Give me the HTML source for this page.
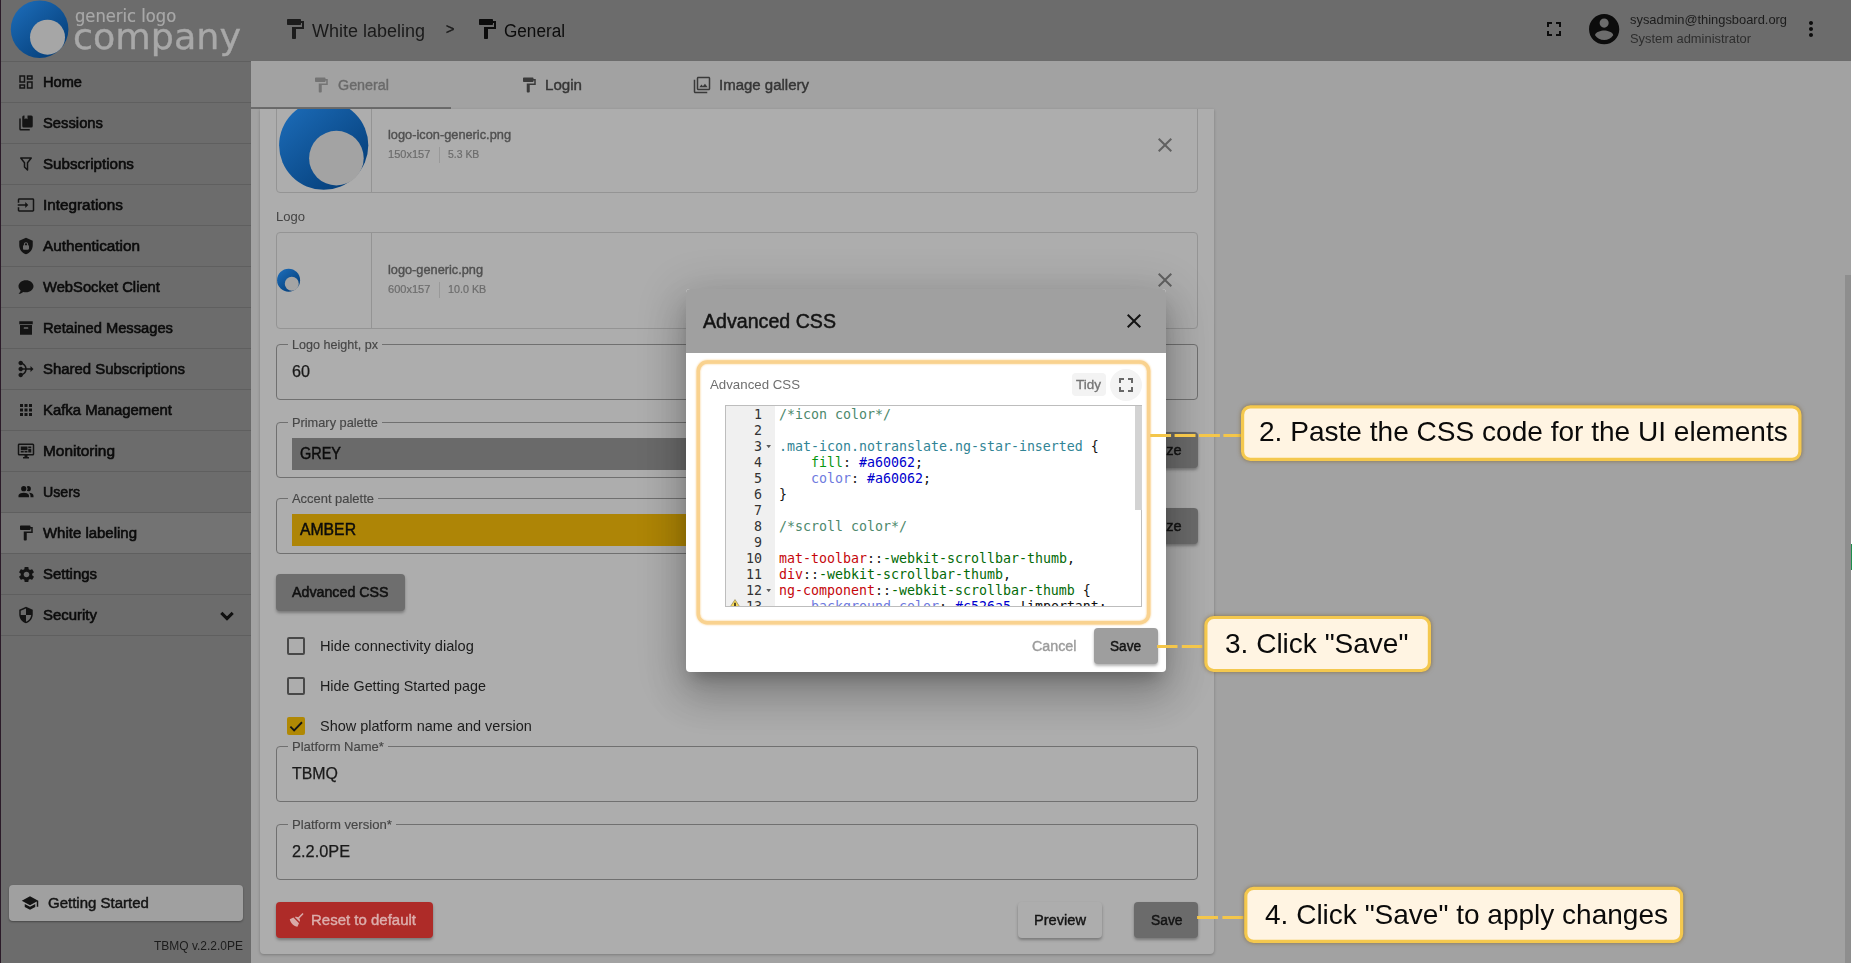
<!DOCTYPE html>
<html lang="en">
<head>
<meta charset="utf-8">
<title>White labeling - Advanced CSS</title>
<style>
*{box-sizing:border-box;margin:0;padding:0}
html,body{width:1852px;height:963px;overflow:hidden;background:#a2a2a2;font-family:"Liberation Sans",sans-serif;color:#161616}
.abs{position:absolute}
svg{display:block}
.t{position:absolute;white-space:nowrap;transform-origin:0 50%}
</style>
</head>
<body>
<div class="abs" style="left:0px;top:0px;width:1852px;height:61px;background:#6c6c6c"></div>
<div class="abs" style="left:0px;top:61px;width:251px;height:902px;background:#6c6c6c"></div>
<svg class="abs" style="left:8px;top:0;width:64px;height:61px" viewBox="8 0 64 61"><defs><linearGradient id="lg" x1="0.15" y1="0.1" x2="0.85" y2="0.9"><stop offset="0" stop-color="#1a68b3"/><stop offset="1" stop-color="#053f7a"/></linearGradient></defs><circle cx="39.6" cy="29.2" r="28.8" fill="url(#lg)"/><circle cx="47.5" cy="37.2" r="17.5" fill="#a6a6a6"/></svg>
<span class="t" style="left:74.70px;top:8.00px;font-size:16.8px;line-height:16.8px;color:#a8a8a8;font-family:'DejaVu Sans','Liberation Sans',sans-serif;-webkit-text-stroke:0.2px #a8a8a8;transform:scaleX(0.9738);">generic logo</span>
<span class="t" style="left:72.80px;top:20.00px;font-size:34.7px;line-height:34.7px;color:#a8a8a8;font-family:'DejaVu Sans','Liberation Sans',sans-serif;-webkit-text-stroke:0.35px #a8a8a8;transform:scaleX(1.0505);">company</span>
<div class="abs" style="left:1px;top:61px;width:250px;height:1px;background:#5f5f5f"></div>
<svg class="abs" style="left:17px;top:73px;width:18px;height:18px;fill:#141414;" viewBox="0 0 24 24"><path d="M19 5v2h-4V5h4M9 5v6H5V5h4m10 8v6h-4v-6h4M9 17v2H5v-2h4M21 3h-8v6h8V3zM11 3H3v10h8V3zm10 8h-8v10h8V11zm-10 4H3v6h8v-6z"/></svg>
<span class="t" style="left:43.00px;top:75.00px;font-size:14.9px;line-height:14.9px;color:#0c0c0c;-webkit-text-stroke:0.6px #0c0c0c;transform:scaleX(0.9812);">Home</span>
<div class="abs" style="left:1px;top:102px;width:250px;height:1px;background:#5f5f5f"></div>
<svg class="abs" style="left:17px;top:114px;width:18px;height:18px;fill:#141414;" viewBox="0 0 24 24"><path d="M19,18H9A2,2 0 0,1 7,16V4A2,2 0 0,1 9,2H10V7L12,5.5L14,7V2H19A2,2 0 0,1 21,4V16A2,2 0 0,1 19,18M17,20V22H5A2,2 0 0,1 3,20V6H5V20H17Z"/></svg>
<span class="t" style="left:43.00px;top:116.00px;font-size:14.9px;line-height:14.9px;color:#0c0c0c;-webkit-text-stroke:0.6px #0c0c0c;transform:scaleX(0.9924);">Sessions</span>
<div class="abs" style="left:1px;top:143px;width:250px;height:1px;background:#5f5f5f"></div>
<svg class="abs" style="left:17px;top:155px;width:18px;height:18px;fill:#141414;" viewBox="0 0 24 24"><path d="M15,19.88C15.04,20.18 14.94,20.5 14.71,20.71C14.32,21.1 13.69,21.1 13.3,20.71L9.29,16.7C9.06,16.47 8.96,16.16 9,15.87V10.75L4.21,4.62C3.87,4.19 3.95,3.56 4.38,3.22C4.57,3.08 4.78,3 5,3V3H19V3C19.22,3 19.43,3.08 19.62,3.22C20.05,3.56 20.13,4.19 19.79,4.62L15,10.75V19.88M7.04,5L11,10.06V15.58L13,17.58V10.05L16.96,5H7.04Z"/></svg>
<span class="t" style="left:43.00px;top:157.00px;font-size:14.9px;line-height:14.9px;color:#0c0c0c;-webkit-text-stroke:0.6px #0c0c0c;transform:scaleX(1.0174);">Subscriptions</span>
<div class="abs" style="left:1px;top:184px;width:250px;height:1px;background:#5f5f5f"></div>
<svg class="abs" style="left:17px;top:196px;width:18px;height:18px;fill:#141414;" viewBox="0 0 24 24"><path d="M21 3.01H3c-1.1 0-2 .9-2 2V9h2V4.99h18v14.03H3V15H1v4.01c0 1.1.9 1.98 2 1.98h18c1.1 0 2-.88 2-1.98v-14c0-1.11-.9-2-2-2zM11 16l4-4-4-4v3H1v2h10v3z"/></svg>
<span class="t" style="left:43.00px;top:198.00px;font-size:14.9px;line-height:14.9px;color:#0c0c0c;-webkit-text-stroke:0.6px #0c0c0c;transform:scaleX(1.0275);">Integrations</span>
<div class="abs" style="left:1px;top:225px;width:250px;height:1px;background:#5f5f5f"></div>
<svg class="abs" style="left:17px;top:237px;width:18px;height:18px;fill:#141414;" viewBox="0 0 24 24"><path d="M12,1L3,5V11C3,16.55 6.84,21.74 12,23C17.16,21.74 21,16.55 21,11V5L12,1M12,7C13.4,7 14.8,8.1 14.8,9.5V11C15.4,11 16,11.6 16,12.3V15.8C16,16.4 15.4,17 14.7,17H9.2C8.6,17 8,16.4 8,15.7V12.2C8,11.6 8.6,11 9.2,11V9.5C9.2,8.1 10.6,7 12,7M12,8.2C11.2,8.2 10.5,8.7 10.5,9.5V11H13.5V9.5C13.5,8.7 12.8,8.2 12,8.2Z"/></svg>
<span class="t" style="left:43.00px;top:239.00px;font-size:14.9px;line-height:14.9px;color:#0c0c0c;-webkit-text-stroke:0.6px #0c0c0c;transform:scaleX(1.0272);">Authentication</span>
<div class="abs" style="left:1px;top:266px;width:250px;height:1px;background:#5f5f5f"></div>
<svg class="abs" style="left:17px;top:278px;width:18px;height:18px;fill:#141414;" viewBox="0 0 24 24"><path d="M12,3C17.5,3 22,6.58 22,11C22,15.42 17.5,19 12,19C10.76,19 9.57,18.82 8.47,18.5C5.55,21 2,21 2,21C4.33,18.67 4.7,17.1 4.75,16.5C3.05,15.07 2,13.13 2,11C2,6.58 6.5,3 12,3Z"/></svg>
<span class="t" style="left:43.00px;top:280.00px;font-size:14.9px;line-height:14.9px;color:#0c0c0c;-webkit-text-stroke:0.6px #0c0c0c;transform:scaleX(0.9902);">WebSocket Client</span>
<div class="abs" style="left:1px;top:307px;width:250px;height:1px;background:#5f5f5f"></div>
<svg class="abs" style="left:17px;top:319px;width:18px;height:18px;fill:#141414;" viewBox="0 0 24 24"><path d="M3,3H21V7H3V3M4,8H20V21H4V8M9.5,11A0.5,0.5 0 0,0 9,11.5V13H15V11.5A0.5,0.5 0 0,0 14.5,11H9.5Z"/></svg>
<span class="t" style="left:43.00px;top:321.00px;font-size:14.9px;line-height:14.9px;color:#0c0c0c;-webkit-text-stroke:0.6px #0c0c0c;transform:scaleX(0.9871);">Retained Messages</span>
<div class="abs" style="left:1px;top:348px;width:250px;height:1px;background:#5f5f5f"></div>
<svg class="abs" style="left:17px;top:360px;width:18px;height:18px;fill:#141414;" viewBox="0 0 24 24"><path d="M18 13h-5.06c-.34 3.1-2.26 5.72-4.94 7.05C7.96 21.69 6.64 23 5 23c-1.66 0-3-1.340-3-3s1.340-3 3-3c.95 0 1.780.45 2.330 1.140 1.900-1.030 3.260-2.910 3.580-5.140h-3.100C7.400 14.160 6.300 15 5 15c-1.660 0-3-1.340-3-3s1.340-3 3-3c1.300 0 2.400.84 2.820 2h3.100c-.32-2.230-1.690-4.100-3.590-5.140C6.780 6.550 5.950 7 5 7 3.340 7 2 5.660 2 4s1.340-3 3-3c1.640 0 2.960 1.310 2.990 2.950 2.680 1.330 4.600 3.950 4.940 7.050H18V8l4 4-4 4v-3z"/></svg>
<span class="t" style="left:43.00px;top:362.00px;font-size:14.9px;line-height:14.9px;color:#0c0c0c;-webkit-text-stroke:0.6px #0c0c0c;transform:scaleX(1.0026);">Shared Subscriptions</span>
<div class="abs" style="left:1px;top:389px;width:250px;height:1px;background:#5f5f5f"></div>
<svg class="abs" style="left:17px;top:401px;width:18px;height:18px;fill:#141414;" viewBox="0 0 24 24"><path d="M4 8h4V4H4v4zm6 12h4v-4h-4v4zm-6 0h4v-4H4v4zm0-6h4v-4H4v4zm6 0h4v-4h-4v4zm6-10v4h4V4h-4zm-6 4h4V4h-4v4zm6 6h4v-4h-4v4zm0 6h4v-4h-4v4z"/></svg>
<span class="t" style="left:43.00px;top:403.00px;font-size:14.9px;line-height:14.9px;color:#0c0c0c;-webkit-text-stroke:0.6px #0c0c0c;transform:scaleX(0.9984);">Kafka Management</span>
<div class="abs" style="left:1px;top:430px;width:250px;height:1px;background:#5f5f5f"></div>
<svg class="abs" style="left:17px;top:442px;width:18px;height:18px;fill:#141414;" viewBox="0 0 24 24"><path d="M21,16V4H3V16H21M21,2A2,2 0 0,1 23,4V16A2,2 0 0,1 21,18H14V20H16V22H8V20H10V18H3C1.89,18 1,17.1 1,16V4C1,2.89 1.89,2 3,2H21M5,6H14V11H5V6M15,6H19V8H15V6M19,9V14H15V9H19M5,12H9V14H5V12M10,12H14V14H10V12Z"/></svg>
<span class="t" style="left:43.00px;top:444.00px;font-size:14.9px;line-height:14.9px;color:#0c0c0c;-webkit-text-stroke:0.6px #0c0c0c;transform:scaleX(1.0350);">Monitoring</span>
<div class="abs" style="left:1px;top:471px;width:250px;height:1px;background:#5f5f5f"></div>
<svg class="abs" style="left:16.7px;top:482.8px;width:18px;height:18px;fill:#111;" viewBox="0 0 24 24"><path d="M16 17V19H2V17S2 13 9 13 16 17 16 17M12.5 7.5A3.5 3.5 0 1 0 9 11A3.5 3.5 0 0 0 12.5 7.5M15.94 13A5.32 5.32 0 0 1 18 17V19H22V17S22 13.37 15.94 13M15 4A3.39 3.39 0 0 0 13.07 4.59A5 5 0 0 1 13.07 10.41A3.39 3.39 0 0 0 15 11A3.5 3.5 0 0 0 15 4Z"/></svg>
<span class="t" style="left:43.00px;top:485.00px;font-size:14.9px;line-height:14.9px;color:#0c0c0c;-webkit-text-stroke:0.6px #0c0c0c;transform:scaleX(0.9509);">Users</span>
<div class="abs" style="left:1px;top:513px;width:250px;height:40px;background:#737373"></div>
<div class="abs" style="left:1px;top:512px;width:250px;height:1px;background:#5f5f5f"></div>
<svg class="abs" style="left:17px;top:524px;width:18px;height:18px;fill:#141414;" viewBox="0 0 24 24"><path d="M18 4V3c0-.55-.45-1-1-1H5c-.55 0-1 .45-1 1v4c0 .55.45 1 1 1h12c.55 0 1-.45 1-1V6h1v4H9v11c0 .55.45 1 1 1h2c.55 0 1-.45 1-1v-9h8V4h-3z"/></svg>
<span class="t" style="left:43.00px;top:526.00px;font-size:14.9px;line-height:14.9px;color:#0c0c0c;-webkit-text-stroke:0.6px #0c0c0c;transform:scaleX(1.0044);">White labeling</span>
<div class="abs" style="left:1px;top:553px;width:250px;height:1px;background:#5f5f5f"></div>
<svg class="abs" style="left:16.5px;top:564.5px;width:19px;height:19px;fill:#141414;" viewBox="0 0 24 24"><path d="M19.14,12.94c0.04-0.3,0.06-0.61,0.06-0.94c0-0.32-0.02-0.64-0.07-0.94l2.03-1.58c0.18-0.14,0.23-0.41,0.12-0.61 l-1.92-3.32c-0.12-0.22-0.37-0.29-0.59-0.22l-2.39,0.96c-0.5-0.38-1.03-0.7-1.62-0.94L14.4,2.81c-0.04-0.24-0.24-0.41-0.48-0.41 h-3.84c-0.24,0-0.43,0.17-0.47,0.41L9.25,5.35C8.66,5.59,8.12,5.92,7.63,6.29L5.24,5.33c-0.22-0.08-0.47,0-0.59,0.22L2.74,8.87 C2.62,9.08,2.66,9.34,2.86,9.48l2.03,1.58C4.84,11.36,4.8,11.69,4.8,12s0.02,0.64,0.07,0.94l-2.03,1.58 c-0.18,0.14-0.23,0.41-0.12,0.61l1.92,3.32c0.12,0.22,0.37,0.29,0.59,0.22l2.39-0.96c0.5,0.38,1.03,0.7,1.62,0.94l0.36,2.54 c0.05,0.24,0.24,0.41,0.48,0.41h3.84c0.24,0,0.44-0.17,0.47-0.41l0.36-2.54c0.59-0.24,1.13-0.56,1.62-0.94l2.39,0.96 c0.22,0.08,0.47,0,0.59-0.22l1.92-3.32c0.12-0.22,0.07-0.47-0.12-0.61L19.14,12.94z M12,15.6c-1.98,0-3.6-1.62-3.6-3.6 s1.62-3.6,3.6-3.6s3.6,1.62,3.6,3.6S13.98,15.6,12,15.6z"/></svg>
<span class="t" style="left:43.00px;top:567.00px;font-size:14.9px;line-height:14.9px;color:#0c0c0c;-webkit-text-stroke:0.6px #0c0c0c;transform:scaleX(1.0030);">Settings</span>
<div class="abs" style="left:1px;top:594px;width:250px;height:1px;background:#5f5f5f"></div>
<svg class="abs" style="left:17px;top:606px;width:18px;height:18px;fill:#141414;" viewBox="0 0 24 24"><path d="M12 1L3 5v6c0 5.55 3.84 10.74 9 12 5.16-1.26 9-6.45 9-12V5l-9-4zm0 10.990h7c-.53 4.120-3.280 7.790-7 8.940V12H5V6.3l7-3.110v8.800z"/></svg>
<span class="t" style="left:43.00px;top:608.00px;font-size:14.9px;line-height:14.9px;color:#0c0c0c;-webkit-text-stroke:0.6px #0c0c0c;transform:scaleX(1.0033);">Security</span>
<div class="abs" style="left:1px;top:635px;width:250px;height:1px;background:#5f5f5f"></div>
<svg class="abs" style="left:215px;top:603.6px;width:24px;height:24px;fill:#111;stroke:#111;stroke-width:1.1" viewBox="0 0 24 24"><path d="M16.59 8.59L12 13.17 7.41 8.59 6 10l6 6 6-6z"/></svg>
<div class="abs" style="left:9px;top:885px;width:234px;height:36px;background:#a0a0a0;border-radius:4px;box-shadow:0 1px 2px rgba(0,0,0,.35)"></div>
<svg class="abs" style="left:21px;top:894px;width:18px;height:18px;fill:#141414;" viewBox="0 0 24 24"><path d="M5 13.18v4L12 21l7-3.82v-4L12 17l-7-3.82zM12 3L1 9l11 6 9-4.91V17h2V9L12 3z"/></svg>
<span class="t" style="left:48.00px;top:896.00px;font-size:14.9px;line-height:14.9px;color:#141414;-webkit-text-stroke:0.45px #141414;transform:scaleX(1.0078);">Getting Started</span>
<span class="t" style="left:154.00px;top:939.50px;font-size:12px;line-height:12px;color:#1c1c1c;transform:scaleX(0.9984);">TBMQ v.2.2.0PE</span>
<div class="abs" style="left:0px;top:0px;width:1px;height:963px;background:#2b1b29"></div>
<svg class="abs" style="left:283px;top:17px;width:24px;height:24px;fill:#1c1c1c;" viewBox="0 0 24 24"><path d="M18 4V3c0-.55-.45-1-1-1H5c-.55 0-1 .45-1 1v4c0 .55.45 1 1 1h12c.55 0 1-.45 1-1V6h1v4H9v11c0 .55.45 1 1 1h2c.55 0 1-.45 1-1v-9h8V4h-3z"/></svg>
<span class="t" style="left:312.00px;top:22.00px;font-size:18px;line-height:18px;color:#1a1a1a;transform:scaleX(0.9994);">White labeling</span>
<span class="t" style="left:446.20px;top:21.50px;font-size:14px;line-height:14px;color:#1a1a1a;-webkit-text-stroke:0.4px #1a1a1a;transform:scaleX(1.0274);">&gt;</span>
<svg class="abs" style="left:475.2px;top:17px;width:24px;height:24px;fill:#0c0c0c;" viewBox="0 0 24 24"><path d="M18 4V3c0-.55-.45-1-1-1H5c-.55 0-1 .45-1 1v4c0 .55.45 1 1 1h12c.55 0 1-.45 1-1V6h1v4H9v11c0 .55.45 1 1 1h2c.55 0 1-.45 1-1v-9h8V4h-3z"/></svg>
<span class="t" style="left:504.00px;top:22.00px;font-size:18px;line-height:18px;color:#0c0c0c;transform:scaleX(0.9526);">General</span>
<svg class="abs" style="left:1542px;top:17px;width:24px;height:24px;fill:#0c0c0c;" viewBox="0 0 24 24"><path d="M7 14H5v5h5v-2H7v-3zm-2-4h2V7h3V5H5v5zm12 7h-3v2h5v-5h-2v3zM14 5v2h3v3h2V5h-5z"/></svg>
<svg class="abs" style="left:1585.85px;top:10.75px;width:36.3px;height:36.3px;fill:#0c0c0c;" viewBox="0 0 24 24"><path d="M12 2C6.48 2 2 6.48 2 12s4.48 10 10 10 10-4.48 10-10S17.52 2 12 2zm0 3c1.66 0 3 1.34 3 3s-1.34 3-3 3-3-1.34-3-3 1.34-3 3-3zm0 14.200c-2.500 0-4.710-1.280-6-3.220.030-1.990 4-3.080 6-3.080 1.990 0 5.970 1.090 6 3.080-1.290 1.940-3.500 3.220-6 3.220z"/></svg>
<span class="t" style="left:1630.00px;top:13.00px;font-size:13px;line-height:13px;color:#1c1c1c;transform:scaleX(0.9909);">sysadmin@thingsboard.org</span>
<span class="t" style="left:1630.00px;top:32.00px;font-size:13px;line-height:13px;color:#2e2e2e;transform:scaleX(0.9911);">System administrator</span>
<svg class="abs" style="left:1799px;top:17px;width:24px;height:24px;fill:#0c0c0c;" viewBox="0 0 24 24"><path d="M12 8c1.1 0 2-.9 2-2s-.9-2-2-2-2 .9-2 2 .9 2 2 2zm0 2c-1.1 0-2 .9-2 2s.9 2 2 2 2-.9 2-2-.9-2-2-2zm0 6c-1.1 0-2 .9-2 2s.9 2 2 2 2-.9 2-2-.9-2-2-2z"/></svg>
<svg class="abs" style="left:312px;top:76px;width:18px;height:18px;fill:#747474;" viewBox="0 0 24 24"><path d="M18 4V3c0-.55-.45-1-1-1H5c-.55 0-1 .45-1 1v4c0 .55.45 1 1 1h12c.55 0 1-.45 1-1V6h1v4H9v11c0 .55.45 1 1 1h2c.55 0 1-.45 1-1v-9h8V4h-3z"/></svg>
<span class="t" style="left:338.00px;top:78.00px;font-size:14px;line-height:14px;color:#6a6a6a;-webkit-text-stroke:0.4px #6a6a6a;transform:scaleX(1.0240);">General</span>
<div class="abs" style="left:251px;top:107px;width:200px;height:2px;background:#6c6c6c"></div>
<svg class="abs" style="left:520px;top:76px;width:18px;height:18px;fill:#3a3a3a;" viewBox="0 0 24 24"><path d="M18 4V3c0-.55-.45-1-1-1H5c-.55 0-1 .45-1 1v4c0 .55.45 1 1 1h12c.55 0 1-.45 1-1V6h1v4H9v11c0 .55.45 1 1 1h2c.55 0 1-.45 1-1v-9h8V4h-3z"/></svg>
<span class="t" style="left:545.00px;top:78.00px;font-size:14px;line-height:14px;color:#363636;-webkit-text-stroke:0.4px #363636;transform:scaleX(1.0801);">Login</span>
<svg class="abs" style="left:693px;top:76px;width:18px;height:18px;fill:#3a3a3a;" viewBox="0 0 24 24"><path d="M15.96 10.29l-2.75 3.54-1.96-2.36L8.5 15h11l-3.54-4.71zM3 5H1v16c0 1.1.9 2 2 2h16v-2H3V5zm18-4H7c-1.1 0-2 .9-2 2v14c0 1.1.9 2 2 2h14c1.1 0 2-.9 2-2V3c0-1.1-.9-2-2-2zm0 16H7V3h14v14z"/></svg>
<span class="t" style="left:719.00px;top:78.00px;font-size:14px;line-height:14px;color:#363636;-webkit-text-stroke:0.4px #363636;transform:scaleX(1.0709);">Image gallery</span>
<div class="abs" style="left:260px;top:109px;width:954px;height:845px;background:#adadad;border-radius:0 0 4px 4px;box-shadow:0 1px 3px rgba(0,0,0,.25)"></div>
<div class="abs" style="left:259px;top:109px;width:955px;height:100px;overflow:hidden">
<div class="abs" style="left:17px;top:-13px;width:922px;height:97px;border:1px solid #949494;border-radius:4px"></div>
<div class="abs" style="left:112px;top:-13px;width:1px;height:97px;background:#949494"></div>
<svg class="abs" style="left:18px;top:-12px;width:94px;height:96px" viewBox="277 97 94 96"><circle cx="323.7" cy="145.25" r="44.6" fill="url(#lg)"/><circle cx="336.4" cy="158.15" r="27.3" fill="#a3a3a3"/></svg>
</div>
<span class="t" style="left:388.00px;top:128.00px;font-size:13px;line-height:13px;color:#505050;-webkit-text-stroke:0.4px #505050;transform:scaleX(0.9838);">logo-icon-generic.png</span>
<span class="t" style="left:388.00px;top:149.00px;font-size:11px;line-height:11px;color:#6c6c6c;-webkit-text-stroke:0.2px #6c6c6c;transform:scaleX(1.0022);">150x157</span>
<div class="abs" style="left:439px;top:147px;width:1px;height:16px;background:#999"></div>
<span class="t" style="left:448.00px;top:149.00px;font-size:11px;line-height:11px;color:#6c6c6c;-webkit-text-stroke:0.2px #6c6c6c;transform:scaleX(0.9479);">5.3 KB</span>
<svg class="abs" style="left:1153.4px;top:133px;width:24px;height:24px;fill:#616161;" viewBox="0 0 24 24"><path d="M19 6.41L17.59 5 12 10.59 6.41 5 5 6.41 10.59 12 5 17.59 6.41 19 12 13.41 17.59 19 19 17.59 13.41 12z"/></svg>
<span class="t" style="left:276.00px;top:209.50px;font-size:13px;line-height:13px;color:#444;transform:scaleX(1.0028);">Logo</span>
<div class="abs" style="left:276px;top:232px;width:922px;height:97px;border:1px solid #949494;border-radius:4px"></div>
<div class="abs" style="left:371px;top:232px;width:1px;height:97px;background:#949494"></div>
<svg class="abs" style="left:276px;top:267px;width:26px;height:26px" viewBox="276 267 26 26"><circle cx="288.6" cy="280.2" r="11.5" fill="url(#lg)"/><circle cx="291.8" cy="283.7" r="7" fill="#a4a4a4"/></svg>
<span class="t" style="left:388.00px;top:263.00px;font-size:13px;line-height:13px;color:#505050;-webkit-text-stroke:0.4px #505050;transform:scaleX(0.9809);">logo-generic.png</span>
<span class="t" style="left:388.00px;top:284.00px;font-size:11px;line-height:11px;color:#6c6c6c;-webkit-text-stroke:0.2px #6c6c6c;transform:scaleX(1.0022);">600x157</span>
<div class="abs" style="left:439px;top:282px;width:1px;height:16px;background:#999"></div>
<span class="t" style="left:448.00px;top:284.00px;font-size:11px;line-height:11px;color:#6c6c6c;-webkit-text-stroke:0.2px #6c6c6c;transform:scaleX(0.9786);">10.0 KB</span>
<svg class="abs" style="left:1153.4px;top:268px;width:24px;height:24px;fill:#616161;" viewBox="0 0 24 24"><path d="M19 6.41L17.59 5 12 10.59 6.41 5 5 6.41 10.59 12 5 17.59 6.41 19 12 13.41 17.59 19 19 17.59 13.41 12z"/></svg>
<div class="abs" style="left:276px;top:344px;width:922px;height:56px;border:1px solid #707070;border-radius:4px"></div>
<div class="abs" style="left:288px;top:344px;width:94.3px;height:1px;background:#adadad"></div>
<span class="t" style="left:292.00px;top:339.00px;font-size:12.4px;line-height:12.4px;color:#464646;-webkit-text-stroke:0.15px #464646;transform:scaleX(1.0141);">Logo height, px</span>
<span class="t" style="left:292.00px;top:364.00px;font-size:16px;line-height:16px;color:#1a1a1a;-webkit-text-stroke:0.25px #1a1a1a;transform:scaleX(1.0114);">60</span>
<div class="abs" style="left:276px;top:422px;width:810px;height:56px;border:1px solid #707070;border-radius:4px"></div>
<div class="abs" style="left:288px;top:422px;width:94.3px;height:1px;background:#adadad"></div>
<span class="t" style="left:292.00px;top:417.00px;font-size:12.4px;line-height:12.4px;color:#464646;-webkit-text-stroke:0.15px #464646;transform:scaleX(1.0314);">Primary palette</span>
<div class="abs" style="left:292px;top:438px;width:778px;height:32px;background:#6a6a6a"></div>
<span class="t" style="left:300.00px;top:446.00px;font-size:16px;line-height:16px;color:#0c0c0c;-webkit-text-stroke:0.45px #0c0c0c;transform:scaleX(0.9042);">GREY</span>
<div class="abs" style="left:276px;top:498px;width:810px;height:56px;border:1px solid #707070;border-radius:4px"></div>
<div class="abs" style="left:288px;top:498px;width:90.3px;height:1px;background:#adadad"></div>
<span class="t" style="left:292.00px;top:493.00px;font-size:12.4px;line-height:12.4px;color:#464646;-webkit-text-stroke:0.15px #464646;transform:scaleX(1.0435);">Accent palette</span>
<div class="abs" style="left:292px;top:514px;width:778px;height:32px;background:#ae8506"></div>
<span class="t" style="left:300.00px;top:522.00px;font-size:16px;line-height:16px;color:#0c0c0c;-webkit-text-stroke:0.45px #0c0c0c;transform:scaleX(0.9842);">AMBER</span>
<div class="abs" style="left:1100px;top:432px;width:98px;height:36px;background:#6b6b6b;border-radius:4px;box-shadow:0 2px 3px rgba(0,0,0,.3)"></div>
<span class="t" style="left:1113.00px;top:442.60px;font-size:14px;line-height:14px;color:#141414;-webkit-text-stroke:0.45px #141414;transform:scaleX(1.0358);">Customize</span>
<div class="abs" style="left:1100px;top:508px;width:98px;height:36px;background:#6b6b6b;border-radius:4px;box-shadow:0 2px 3px rgba(0,0,0,.3)"></div>
<span class="t" style="left:1113.00px;top:518.60px;font-size:14px;line-height:14px;color:#141414;-webkit-text-stroke:0.45px #141414;transform:scaleX(1.0358);">Customize</span>
<div class="abs" style="left:276px;top:574px;width:129px;height:36.5px;background:#6e6e6e;border-radius:4px;box-shadow:0 2px 3px rgba(0,0,0,.3)"></div>
<span class="t" style="left:292.00px;top:585.00px;font-size:14px;line-height:14px;color:#111;-webkit-text-stroke:0.55px #111;transform:scaleX(1.0164);">Advanced CSS</span>
<div class="abs" style="left:287px;top:637px;width:18px;height:18px;border:2px solid #484848;border-radius:2px"></div>
<span class="t" style="left:320.00px;top:639.00px;font-size:14.2px;line-height:14.2px;color:#1c1c1c;transform:scaleX(1.0323);">Hide connectivity dialog</span>
<div class="abs" style="left:287px;top:677px;width:18px;height:18px;border:2px solid #484848;border-radius:2px"></div>
<span class="t" style="left:320.00px;top:679.00px;font-size:14.2px;line-height:14.2px;color:#1c1c1c;transform:scaleX(1.0110);">Hide Getting Started page</span>
<div class="abs" style="left:287px;top:717px;width:18px;height:18px;background:#b08804;border-radius:2px"></div>
<svg class="abs" style="left:287px;top:717px;width:18px;height:18px" viewBox="0 0 24 24"><path d="M4.5 12.8l5 5L20 7" fill="none" stroke="#151515" stroke-width="2.4"/></svg>
<span class="t" style="left:320.00px;top:719.00px;font-size:14.2px;line-height:14.2px;color:#1c1c1c;transform:scaleX(1.0213);">Show platform name and version</span>
<div class="abs" style="left:276px;top:746px;width:922px;height:56px;border:1px solid #707070;border-radius:4px"></div>
<div class="abs" style="left:288px;top:746px;width:100.3px;height:1px;background:#adadad"></div>
<span class="t" style="left:292.00px;top:741.00px;font-size:12.4px;line-height:12.4px;color:#464646;-webkit-text-stroke:0.15px #464646;transform:scaleX(1.0512);">Platform Name*</span>
<span class="t" style="left:292.00px;top:766.00px;font-size:16px;line-height:16px;color:#1a1a1a;-webkit-text-stroke:0.25px #1a1a1a;transform:scaleX(0.9953);">TBMQ</span>
<div class="abs" style="left:276px;top:824px;width:922px;height:56px;border:1px solid #707070;border-radius:4px"></div>
<div class="abs" style="left:288px;top:824px;width:108.3px;height:1px;background:#adadad"></div>
<span class="t" style="left:292.00px;top:819.00px;font-size:12.4px;line-height:12.4px;color:#464646;-webkit-text-stroke:0.15px #464646;transform:scaleX(1.0592);">Platform version*</span>
<span class="t" style="left:292.00px;top:844.00px;font-size:16px;line-height:16px;color:#1a1a1a;-webkit-text-stroke:0.25px #1a1a1a;transform:scaleX(1.0188);">2.2.0PE</span>
<div class="abs" style="left:276px;top:902px;width:157px;height:36px;background:#ae2b28;border-radius:4px;box-shadow:0 2px 3px rgba(0,0,0,.3)"></div>
<svg class="abs" style="left:288px;top:911px;width:18px;height:18px;fill:#d9a9a7;" viewBox="0 0 24 24"><path d="M19.36,2.72L20.78,4.14L15.06,9.85C16.13,11.39 16.28,13.24 15.38,14.44L9.06,8.12C10.26,7.22 12.11,7.37 13.65,8.44L19.36,2.72M5.93,17.57C3.92,15.56 2.69,13.16 2.35,10.92L7.23,8.83L14.67,16.27L12.58,21.15C10.34,20.81 7.94,19.58 5.93,17.57Z"/></svg>
<span class="t" style="left:311.00px;top:913.00px;font-size:14px;line-height:14px;color:#dcaeac;-webkit-text-stroke:0.4px #dcaeac;transform:scaleX(1.0708);">Reset to default</span>
<div class="abs" style="left:1018px;top:902px;width:84px;height:36px;background:#adadad;border-radius:4px;box-shadow:0 2px 3px rgba(0,0,0,.3)"></div>
<span class="t" style="left:1034.00px;top:913.00px;font-size:14px;line-height:14px;color:#141414;-webkit-text-stroke:0.4px #141414;transform:scaleX(1.0443);">Preview</span>
<div class="abs" style="left:1134px;top:902px;width:64px;height:36.4px;background:#6b6b6b;border-radius:4px;box-shadow:0 2px 3px rgba(0,0,0,.3)"></div>
<span class="t" style="left:1150.50px;top:912.80px;font-size:14px;line-height:14px;color:#141414;-webkit-text-stroke:0.45px #141414;transform:scaleX(0.9871);">Save</span>
<div class="abs" style="left:1845px;top:275px;width:6px;height:688px;background:#8e8e8e"></div>
<div class="abs" style="left:1851px;top:0px;width:1px;height:963px;background:#fff"></div>
<div class="abs" style="left:1851px;top:544px;width:1px;height:26px;background:#1e8e4e"></div>
<div class="abs" style="left:686px;top:289px;width:480px;height:383px;background:#fff;border-radius:4px;box-shadow:0 11px 15px -7px rgba(0,0,0,.25),0 24px 38px 3px rgba(0,0,0,.16),0 9px 46px 8px rgba(0,0,0,.14)"></div>
<div class="abs" style="left:686px;top:289px;width:480px;height:64px;background:#a0a0a0;border-radius:4px 4px 0 0"></div>
<span class="t" style="left:702.50px;top:310.60px;font-size:20px;line-height:20px;color:#141414;-webkit-text-stroke:0.5px #141414;transform:scaleX(0.9806);">Advanced CSS</span>
<svg class="abs" style="left:1122px;top:309px;width:24px;height:24px;fill:#141414;" viewBox="0 0 24 24"><path d="M19 6.41L17.59 5 12 10.59 6.41 5 5 6.41 10.59 12 5 17.59 6.41 19 12 13.41 17.59 19 19 17.59 13.41 12z"/></svg>
<svg class="abs" style="left:690px;top:354px;width:468px;height:278px;overflow:visible" viewBox="690 354 468 278"><rect x="698.25" y="362.1" width="450.4" height="260.65" rx="9" fill="none" stroke="#f9d28f" stroke-width="3.5" style="filter:drop-shadow(0 0 1px rgba(248,200,120,.9))"/></svg>
<span class="t" style="left:710.00px;top:377.50px;font-size:13px;line-height:13px;color:#6f6f6f;transform:scaleX(1.0208);">Advanced CSS</span>
<div class="abs" style="left:1072px;top:373px;width:34px;height:22.7px;background:#f3f3f3;border-radius:4px"></div>
<span class="t" style="left:1076.20px;top:379.00px;font-size:12px;line-height:12px;color:#757575;-webkit-text-stroke:0.3px #757575;transform:scaleX(1.1249);">Tidy</span>
<div class="abs" style="left:1110px;top:368.8px;width:31.8px;height:31.8px;background:#f3f3f3;border-radius:16px"></div>
<svg class="abs" style="left:1114px;top:373.1px;width:24px;height:24px;fill:#676767;" viewBox="0 0 24 24"><path d="M7 14H5v5h5v-2H7v-3zm-2-4h2V7h3V5H5v5zm12 7h-3v2h5v-5h-2v3zM14 5v2h3v3h2V5h-5z"/></svg>
<div class="abs" style="left:725px;top:405px;width:417px;height:202px;border:1px solid #bdbdbd;background:#fff"></div>
<div class="abs" style="left:726px;top:406px;width:49px;height:200px;background:#f0f0f0"></div>
<div class="abs" style="left:1135px;top:406px;width:7px;height:104px;background:#d3d3d3"></div>
<div class="abs" style="left:726px;top:406px;width:408px;height:200px;overflow:hidden;font-family:'DejaVu Sans Mono','Liberation Mono',monospace;font-size:13.29px;line-height:16px;white-space:pre">
<span class="abs" style="right:372px;top:1px;color:#333">1</span>
<span class="abs" style="left:53px;top:1px"><span style="color:#4c886b">/*icon color*/</span></span>
<span class="abs" style="right:372px;top:17px;color:#333">2</span>
<span class="abs" style="left:53px;top:17px"></span>
<span class="abs" style="right:372px;top:33px;color:#333">3</span>
<svg class="abs" style="left:39.7px;top:38.8px;width:5.4px;height:3.2px" viewBox="0 0 6 4"><path d="M0 0h6L3 4z" fill="#5a5a5a"/></svg>
<span class="abs" style="left:53px;top:33px"><span style="color:#318495">.mat-icon.notranslate.ng-star-inserted</span><span style="color:#111"> {</span></span>
<span class="abs" style="right:372px;top:49px;color:#333">4</span>
<span class="abs" style="left:53px;top:49px"><span style="color:#06960e">    fill</span><span style="color:#222">: </span><span style="color:#0000cd">#a60062</span><span style="color:#111">;</span></span>
<span class="abs" style="right:372px;top:65px;color:#333">5</span>
<span class="abs" style="left:53px;top:65px"><span style="color:#6d79de">    color</span><span style="color:#222">: </span><span style="color:#0000cd">#a60062</span><span style="color:#111">;</span></span>
<span class="abs" style="right:372px;top:81px;color:#333">6</span>
<span class="abs" style="left:53px;top:81px"><span style="color:#111">}</span></span>
<span class="abs" style="right:372px;top:97px;color:#333">7</span>
<span class="abs" style="left:53px;top:97px"></span>
<span class="abs" style="right:372px;top:113px;color:#333">8</span>
<span class="abs" style="left:53px;top:113px"><span style="color:#4c886b">/*scroll color*/</span></span>
<span class="abs" style="right:372px;top:129px;color:#333">9</span>
<span class="abs" style="left:53px;top:129px"></span>
<span class="abs" style="right:372px;top:145px;color:#333">10</span>
<span class="abs" style="left:53px;top:145px"><span style="color:#c5060b">mat-toolbar</span><span style="color:#1a1a1a">::</span><span style="color:#036a07">-webkit-scrollbar-thumb</span><span style="color:#111">,</span></span>
<span class="abs" style="right:372px;top:161px;color:#333">11</span>
<span class="abs" style="left:53px;top:161px"><span style="color:#c5060b">div</span><span style="color:#1a1a1a">::</span><span style="color:#036a07">-webkit-scrollbar-thumb</span><span style="color:#111">,</span></span>
<span class="abs" style="right:372px;top:177px;color:#333">12</span>
<svg class="abs" style="left:39.7px;top:182.8px;width:5.4px;height:3.2px" viewBox="0 0 6 4"><path d="M0 0h6L3 4z" fill="#5a5a5a"/></svg>
<span class="abs" style="left:53px;top:177px"><span style="color:#c5060b">ng-component</span><span style="color:#1a1a1a">::</span><span style="color:#036a07">-webkit-scrollbar-thumb</span><span style="color:#111"> {</span></span>
<span class="abs" style="right:372px;top:193px;color:#333">13</span>
<svg class="abs" style="left:2.3px;top:193.4px;width:14px;height:11px" viewBox="0 0 14 11"><path d="M7 0.6L13.5 10.5H0.5z" fill="#fadc58" stroke="#9a8f68" stroke-width=".8"/><path d="M6.3 3.8h1.4v3.8h-1.4zM6.3 8.3h1.4v1.2h-1.4z" fill="#111"/></svg>
<span class="abs" style="left:53px;top:193px"><span style="color:#6d79de">    background-color</span><span style="color:#222">: </span><span style="color:#0000cd">#c526a5</span><span style="color:#111"> !important;</span></span>
</div>
<span class="t" style="left:1031.50px;top:638.60px;font-size:14px;line-height:14px;color:#9c9c9c;-webkit-text-stroke:0.4px #9c9c9c;transform:scaleX(1.0211);">Cancel</span>
<div class="abs" style="left:1094px;top:628px;width:64px;height:36px;background:#9e9e9e;border-radius:4px;box-shadow:0 2px 3px rgba(0,0,0,.3)"></div>
<span class="t" style="left:1110.20px;top:638.60px;font-size:14px;line-height:14px;color:#141414;-webkit-text-stroke:0.45px #141414;transform:scaleX(0.9746);">Save</span>
<svg class="abs" style="left:1150.3px;top:433.90px;width:92.7px;height:3.2px" viewBox="0 0 92.7 3.2"><path d="M0 1.6H92.7" stroke="#f4c64a" stroke-width="3.2" stroke-dasharray="21 3.5" fill="none"/></svg>
<svg class="abs" style="left:1233px;top:397px;width:578px;height:73px" viewBox="1233 397 578 73"><rect x="1242.60" y="406.90" width="557.30" height="52.40" rx="7.8" fill="#fff4e2" stroke="#f4c84e" stroke-width="3.2" style="filter:drop-shadow(0 0 2.2px rgba(105,70,0,.55))"/></svg>
<span class="t" style="left:1258.80px;top:418.00px;font-size:28px;line-height:28px;color:#0a0a0a;transform:scaleX(1.0021);">2. Paste the CSS code for the UI elements</span>
<svg class="abs" style="left:1157.3px;top:644.90px;width:49.0px;height:3.2px" viewBox="0 0 49.0 3.2"><path d="M0 1.6H49.0" stroke="#f4c64a" stroke-width="3.2" stroke-dasharray="20.5 4.3" fill="none"/></svg>
<svg class="abs" style="left:1196px;top:607px;width:244px;height:74px" viewBox="1196 607 244 74"><rect x="1205.90" y="617.50" width="223.50" height="53.00" rx="7.8" fill="#fff4e2" stroke="#f4c84e" stroke-width="3.2" style="filter:drop-shadow(0 0 2.2px rgba(105,70,0,.55))"/></svg>
<span class="t" style="left:1224.80px;top:629.60px;font-size:28px;line-height:28px;color:#0a0a0a;transform:scaleX(1.0007);">3. Click "Save"</span>
<svg class="abs" style="left:1196.9px;top:915.90px;width:49.3px;height:3.2px" viewBox="0 0 49.3 3.2"><path d="M0 1.6H49.3" stroke="#f4c64a" stroke-width="3.2" stroke-dasharray="21 4.4" fill="none"/></svg>
<svg class="abs" style="left:1236px;top:878px;width:457px;height:74px" viewBox="1236 878 457 74"><rect x="1245.80" y="888.30" width="435.80" height="53.00" rx="7.8" fill="#fff4e2" stroke="#f4c84e" stroke-width="3.2" style="filter:drop-shadow(0 0 2.2px rgba(105,70,0,.55))"/></svg>
<span class="t" style="left:1264.50px;top:900.50px;font-size:28px;line-height:28px;color:#0a0a0a;transform:scaleX(1.0006);">4. Click "Save" to apply changes</span>
</body>
</html>
